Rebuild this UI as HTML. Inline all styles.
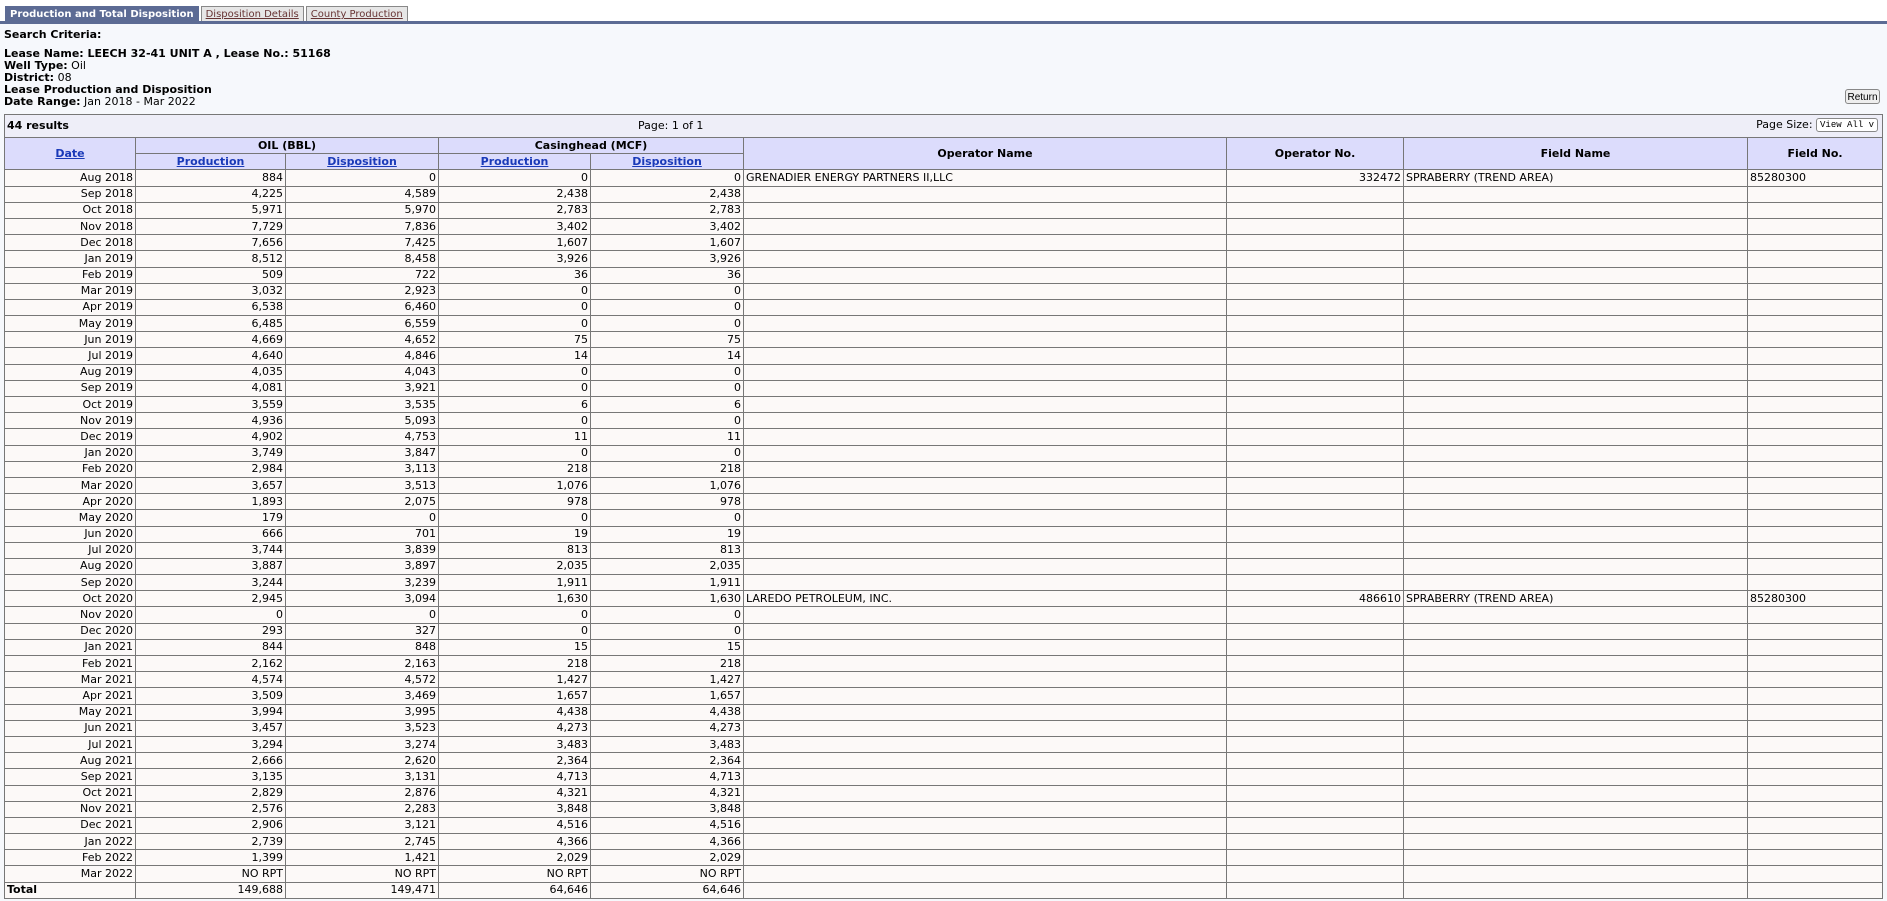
<!DOCTYPE html>
<html><head><meta charset="utf-8"><style>
body{margin:0;background:#fff;font-family:"DejaVu Sans","Liberation Sans",sans-serif;font-size:11px;color:#000;}
.tabs{position:absolute;top:6px;left:5px;height:15px;display:flex;}
.tab{height:15px;line-height:15px;padding:0 4px;font-size:10px;border:1px solid #888;border-bottom:none;background:#e6e6e6;color:#633;text-decoration:underline;margin-right:2px;box-sizing:border-box;}
.tab.act{background:#5c6b94;color:#fff;font-weight:bold;text-decoration:none;border-color:#5c6b94;}
.bar{position:absolute;top:21px;left:0;width:1887px;height:3px;background:#5c6b94;}
.main{position:absolute;top:24px;left:0;width:1887px;height:877px;background:#f6f8fc;}
.crit{position:absolute;left:4px;font-size:11px;line-height:12px;}
.ret{position:absolute;left:1845px;top:65px;width:35px;height:15px;border:1px solid #888;border-radius:3px;background:#eee;font-family:"Liberation Sans",sans-serif;font-size:10px;text-align:center;line-height:15px;box-sizing:border-box;}
table{position:absolute;left:4px;top:90px;border-collapse:collapse;table-layout:fixed;width:1878px;}
td,th{border:1px solid #777;padding:0 2px;height:15.2px;line-height:14px;font-size:11px;white-space:nowrap;overflow:hidden;}
th{background:#dcdcfc;font-weight:bold;text-align:center;}
th a{color:#1a3ab8;text-decoration:underline;}
td{background:#fcf9f8;text-align:right;}
td.l{text-align:left;}
.res td{background:#eeeef8;height:22px;}
.sel{display:inline-block;border:1px solid #888;border-radius:3px;font-family:"Liberation Mono",monospace;font-size:9px;padding:0 3px;height:12px;line-height:12px;background:#fff;vertical-align:middle;}
</style></head><body>
<div class="tabs"><div class="tab act">Production and Total Disposition</div><div class="tab">Disposition Details</div><div class="tab">County Production</div></div>
<div class="bar"></div>
<div class="main">
<div class="crit" style="top:5px;font-weight:bold">Search Criteria:</div>
<div class="crit" style="top:24px"><b>Lease Name: LEECH 32-41 UNIT A , Lease No.: 51168</b><br><b>Well Type:</b> Oil<br><b>District:</b> 08<br><b>Lease Production and Disposition</b><br><b>Date Range:</b> Jan 2018 - Mar 2022</div>
<div class="ret">Return</div>
<table>
<colgroup><col style="width:131px"><col style="width:150px"><col style="width:153px"><col style="width:152px"><col style="width:153px"><col style="width:483px"><col style="width:177px"><col style="width:344px"><col style="width:135px"></colgroup>
<tr class="res"><td colspan="9" style="position:relative;text-align:left"><b>44 results</b><span style="position:absolute;left:633px;top:4px">Page: 1 of 1</span><span style="position:absolute;right:4px;top:3px">Page Size: <span class="sel">View All v</span></span></td></tr>
<tr><th rowspan="2"><a>Date</a></th><th colspan="2">OIL (BBL)</th><th colspan="2">Casinghead (MCF)</th><th rowspan="2">Operator Name</th><th rowspan="2">Operator No.</th><th rowspan="2">Field Name</th><th rowspan="2">Field No.</th></tr>
<tr><th><a>Production</a></th><th><a>Disposition</a></th><th><a>Production</a></th><th><a>Disposition</a></th></tr>
<tr><td>Aug 2018</td><td>884</td><td>0</td><td>0</td><td>0</td><td class="l">GRENADIER ENERGY PARTNERS II,LLC</td><td>332472</td><td class="l">SPRABERRY (TREND AREA)</td><td class="l">85280300</td></tr>
<tr><td>Sep 2018</td><td>4,225</td><td>4,589</td><td>2,438</td><td>2,438</td><td></td><td></td><td></td><td></td></tr>
<tr><td>Oct 2018</td><td>5,971</td><td>5,970</td><td>2,783</td><td>2,783</td><td></td><td></td><td></td><td></td></tr>
<tr><td>Nov 2018</td><td>7,729</td><td>7,836</td><td>3,402</td><td>3,402</td><td></td><td></td><td></td><td></td></tr>
<tr><td>Dec 2018</td><td>7,656</td><td>7,425</td><td>1,607</td><td>1,607</td><td></td><td></td><td></td><td></td></tr>
<tr><td>Jan 2019</td><td>8,512</td><td>8,458</td><td>3,926</td><td>3,926</td><td></td><td></td><td></td><td></td></tr>
<tr><td>Feb 2019</td><td>509</td><td>722</td><td>36</td><td>36</td><td></td><td></td><td></td><td></td></tr>
<tr><td>Mar 2019</td><td>3,032</td><td>2,923</td><td>0</td><td>0</td><td></td><td></td><td></td><td></td></tr>
<tr><td>Apr 2019</td><td>6,538</td><td>6,460</td><td>0</td><td>0</td><td></td><td></td><td></td><td></td></tr>
<tr><td>May 2019</td><td>6,485</td><td>6,559</td><td>0</td><td>0</td><td></td><td></td><td></td><td></td></tr>
<tr><td>Jun 2019</td><td>4,669</td><td>4,652</td><td>75</td><td>75</td><td></td><td></td><td></td><td></td></tr>
<tr><td>Jul 2019</td><td>4,640</td><td>4,846</td><td>14</td><td>14</td><td></td><td></td><td></td><td></td></tr>
<tr><td>Aug 2019</td><td>4,035</td><td>4,043</td><td>0</td><td>0</td><td></td><td></td><td></td><td></td></tr>
<tr><td>Sep 2019</td><td>4,081</td><td>3,921</td><td>0</td><td>0</td><td></td><td></td><td></td><td></td></tr>
<tr><td>Oct 2019</td><td>3,559</td><td>3,535</td><td>6</td><td>6</td><td></td><td></td><td></td><td></td></tr>
<tr><td>Nov 2019</td><td>4,936</td><td>5,093</td><td>0</td><td>0</td><td></td><td></td><td></td><td></td></tr>
<tr><td>Dec 2019</td><td>4,902</td><td>4,753</td><td>11</td><td>11</td><td></td><td></td><td></td><td></td></tr>
<tr><td>Jan 2020</td><td>3,749</td><td>3,847</td><td>0</td><td>0</td><td></td><td></td><td></td><td></td></tr>
<tr><td>Feb 2020</td><td>2,984</td><td>3,113</td><td>218</td><td>218</td><td></td><td></td><td></td><td></td></tr>
<tr><td>Mar 2020</td><td>3,657</td><td>3,513</td><td>1,076</td><td>1,076</td><td></td><td></td><td></td><td></td></tr>
<tr><td>Apr 2020</td><td>1,893</td><td>2,075</td><td>978</td><td>978</td><td></td><td></td><td></td><td></td></tr>
<tr><td>May 2020</td><td>179</td><td>0</td><td>0</td><td>0</td><td></td><td></td><td></td><td></td></tr>
<tr><td>Jun 2020</td><td>666</td><td>701</td><td>19</td><td>19</td><td></td><td></td><td></td><td></td></tr>
<tr><td>Jul 2020</td><td>3,744</td><td>3,839</td><td>813</td><td>813</td><td></td><td></td><td></td><td></td></tr>
<tr><td>Aug 2020</td><td>3,887</td><td>3,897</td><td>2,035</td><td>2,035</td><td></td><td></td><td></td><td></td></tr>
<tr><td>Sep 2020</td><td>3,244</td><td>3,239</td><td>1,911</td><td>1,911</td><td></td><td></td><td></td><td></td></tr>
<tr><td>Oct 2020</td><td>2,945</td><td>3,094</td><td>1,630</td><td>1,630</td><td class="l">LAREDO PETROLEUM, INC.</td><td>486610</td><td class="l">SPRABERRY (TREND AREA)</td><td class="l">85280300</td></tr>
<tr><td>Nov 2020</td><td>0</td><td>0</td><td>0</td><td>0</td><td></td><td></td><td></td><td></td></tr>
<tr><td>Dec 2020</td><td>293</td><td>327</td><td>0</td><td>0</td><td></td><td></td><td></td><td></td></tr>
<tr><td>Jan 2021</td><td>844</td><td>848</td><td>15</td><td>15</td><td></td><td></td><td></td><td></td></tr>
<tr><td>Feb 2021</td><td>2,162</td><td>2,163</td><td>218</td><td>218</td><td></td><td></td><td></td><td></td></tr>
<tr><td>Mar 2021</td><td>4,574</td><td>4,572</td><td>1,427</td><td>1,427</td><td></td><td></td><td></td><td></td></tr>
<tr><td>Apr 2021</td><td>3,509</td><td>3,469</td><td>1,657</td><td>1,657</td><td></td><td></td><td></td><td></td></tr>
<tr><td>May 2021</td><td>3,994</td><td>3,995</td><td>4,438</td><td>4,438</td><td></td><td></td><td></td><td></td></tr>
<tr><td>Jun 2021</td><td>3,457</td><td>3,523</td><td>4,273</td><td>4,273</td><td></td><td></td><td></td><td></td></tr>
<tr><td>Jul 2021</td><td>3,294</td><td>3,274</td><td>3,483</td><td>3,483</td><td></td><td></td><td></td><td></td></tr>
<tr><td>Aug 2021</td><td>2,666</td><td>2,620</td><td>2,364</td><td>2,364</td><td></td><td></td><td></td><td></td></tr>
<tr><td>Sep 2021</td><td>3,135</td><td>3,131</td><td>4,713</td><td>4,713</td><td></td><td></td><td></td><td></td></tr>
<tr><td>Oct 2021</td><td>2,829</td><td>2,876</td><td>4,321</td><td>4,321</td><td></td><td></td><td></td><td></td></tr>
<tr><td>Nov 2021</td><td>2,576</td><td>2,283</td><td>3,848</td><td>3,848</td><td></td><td></td><td></td><td></td></tr>
<tr><td>Dec 2021</td><td>2,906</td><td>3,121</td><td>4,516</td><td>4,516</td><td></td><td></td><td></td><td></td></tr>
<tr><td>Jan 2022</td><td>2,739</td><td>2,745</td><td>4,366</td><td>4,366</td><td></td><td></td><td></td><td></td></tr>
<tr><td>Feb 2022</td><td>1,399</td><td>1,421</td><td>2,029</td><td>2,029</td><td></td><td></td><td></td><td></td></tr>
<tr><td>Mar 2022</td><td>NO RPT</td><td>NO RPT</td><td>NO RPT</td><td>NO RPT</td><td></td><td></td><td></td><td></td></tr>
<tr><td class="l"><b>Total</b></td><td>149,688</td><td>149,471</td><td>64,646</td><td>64,646</td><td></td><td></td><td></td><td></td></tr>
</table>
</div>
</body></html>
